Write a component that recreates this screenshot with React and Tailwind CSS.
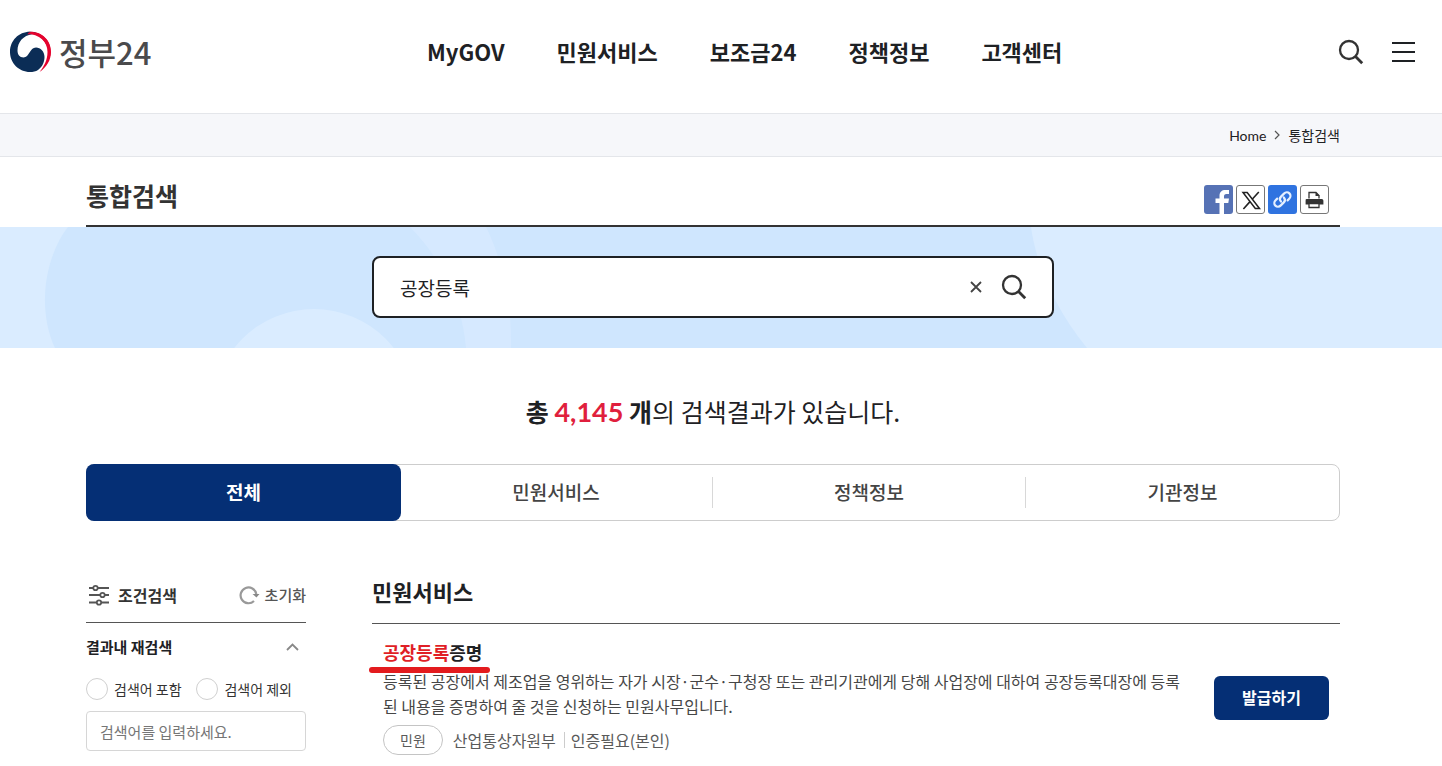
import { useState } from 'react';

const MENUS = ['MyGOV', '민원서비스', '보조금24', '정책정보', '고객센터'];
const TABS = ['전체', '민원서비스', '정책정보', '기관정보'];

function SearchIcon({ className }) {
  return (
    <svg viewBox="0 0 26 26" className={className} fill="none" stroke="currentColor" aria-hidden="true">
      <circle cx="11" cy="11" r="9" strokeWidth="2.3" />
      <path d="M17.5 17.5 L24.2 24.2" strokeWidth="2.8" />
    </svg>
  );
}

function Logo() {
  return (
    <a href="#" className="flex items-center gap-2 text-[#4a4a4c]">
      <svg viewBox="0 0 42 42" className="size-[42px]" aria-hidden="true">
        {/* red outer crescent */}
        <path d="M19 1 C32 -0.5 42 9 42 21 C42 29 37.5 36.5 30.5 41 C35 35.5 38.5 29 38.5 21 C38.5 11 31 3 19 1 Z" fill="#e4032e" />
        {/* navy lobe with the white swirl cut out */}
        <path d="M21 0.8 C9.5 0.8 1 9.8 1 21 C1 32 10 41 21 41 C24 41 26.8 40.4 29 39 C34 35.5 35.5 30 35.5 26 C35.5 20.5 31.5 16.5 27 16.5 C20.5 16.5 20.5 26.5 14.5 26.5 C10.5 26.5 8.5 23.5 8.5 19.5 C8.5 11 14.5 4.3 23 3.2 C26 2.9 28.5 3.2 30.5 4 C28 2 24.5 0.8 21 0.8 Z" fill="#0b2d56" />
        <path d="M22 1 C33 1 41.6 9.5 41.6 20.5 C41.6 23 41.2 25.5 40.4 28 C40.5 14 34 5.5 22 3.3 C20.5 3.1 19.5 3.3 18.5 3.6 C19 2.2 20 1 22 1 Z" fill="#e4032e" />
      </svg>
      <span className="text-[31px] leading-none font-medium">정부24</span>
    </a>
  );
}

function Header() {
  return (
    <header className="flex h-[114px] items-center justify-between border-b border-[#e4e6ea] pr-[26px] pb-[10px] pl-[9px]">
      <Logo />
      <nav className="flex gap-[52px] text-[22px] font-bold text-[#1e2124]">
        {MENUS.map((menu) => (
          <a key={menu} href="#">{menu}</a>
        ))}
      </nav>
      <div className="flex items-center gap-7 text-[#333]">
        <button aria-label="검색"><SearchIcon className="size-[26px]" /></button>
        <button aria-label="전체메뉴">
          <svg viewBox="0 0 24 20" className="h-5 w-6" stroke="#1e2124" strokeWidth="2" aria-hidden="true">
            <path d="M0 1 H23 M0 10 H23 M0 19 H23" />
          </svg>
        </button>
      </div>
    </header>
  );
}

function ShareButtons() {
  return (
    <div className="flex gap-[3px] pr-[11px]">
      <button aria-label="페이스북 공유" className="size-[29px] overflow-hidden rounded-[3px] bg-[#5672b5]">
        <svg viewBox="0 0 29 29" className="size-full" aria-hidden="true">
          <path d="M15.5 29 V18 H11.5 V13.5 H15.5 V11 C15.5 6.8 18 5 21.3 5 H25 V9 H22.5 C20.5 9 20 10 20 11.4 V13.5 H25 L24.3 18 H20 V29 Z" fill="#fff" />
        </svg>
      </button>
      <button aria-label="X 공유" className="size-[29px] rounded-[3px] border border-[#777] bg-white">
        <svg viewBox="0 0 27 27" className="size-full" fill="none" stroke="#222" aria-hidden="true">
          <path d="M6 6.5 H10.2 L22.5 22.5 H18.3 Z" strokeWidth="1.5" />
          <path d="M21.8 6 L15.2 13.2 M13 15.6 L6.4 23" strokeWidth="1.6" />
        </svg>
      </button>
      <button aria-label="주소 복사" className="size-[29px] rounded-[3px] bg-[#2f73e0]">
        <svg viewBox="0 0 29 29" className="size-full" fill="none" stroke="#e6f0ff" strokeWidth="2.2" strokeLinecap="round" aria-hidden="true">
          <path d="M13 16.6 C11.4 14.8 11.6 13 13 11.6 L16 8.6 C17.6 7 20 7 21.4 8.4 C22.9 9.9 22.8 12.2 21.2 13.8 L19.6 15.4" />
          <path d="M15.8 12.4 C17.4 14.2 17.2 16 15.8 17.4 L12.8 20.4 C11.2 22 8.8 22 7.4 20.6 C5.9 19.1 6 16.8 7.6 15.2 L9.2 13.6" />
        </svg>
      </button>
      <button aria-label="인쇄" className="size-[29px] rounded-[3px] border border-[#777] bg-white">
        <svg viewBox="0 0 27 27" className="size-full" aria-hidden="true">
          <path d="M8 12.5 V6.5 H15 L18 9.5 V12.5" fill="none" stroke="#333" strokeWidth="1.3" />
          <path d="M14.5 6 L18.7 10 H14.5 Z" fill="#333" />
          <path d="M5.5 13 H20.5 C21.8 13 22.4 13.8 22.4 15 V18.5 H4.6 V15 C4.6 13.8 4.6 13 5.5 13 Z" fill="#333" />
          <path d="M8 17.5 V21.5 H18 V17.5 Z" fill="#fff" stroke="#333" strokeWidth="1.3" />
        </svg>
      </button>
    </div>
  );
}

function SearchBand() {
  const [keyword, setKeyword] = useState('공장등록');

  return (
    <section className="relative h-[121px] overflow-hidden bg-[#cfe6fe] pt-[29px] pr-4">
      <svg width="1442" height="121" className="absolute top-0 left-0 h-full" aria-hidden="true">
        <path d="M0 0 H68 C46 28 36 80 55 121 H0 Z" fill="#daecff" />
        <path d="M410 0 H486 C502 32 512 75 511 121 H466 C462 75 442 32 410 0 Z" fill="#d6e9ff" />
        <circle cx="314" cy="183" r="101" fill="#daecff" />
      </svg>
      <svg viewBox="0 0 411 121" className="absolute top-0 right-0 h-full" aria-hidden="true">
        <path d="M0 0 H411 V121 H56 C26 84 6 42 0 0 Z" fill="#daecff" />
      </svg>
      <form className="relative mx-auto flex h-[62px] max-w-[682px] items-center rounded-lg border-2 border-[#1e2124] bg-white pr-[25px] pl-[26px]">
        <input
          type="text"
          aria-label="통합검색어"
          value={keyword}
          onChange={(e) => setKeyword(e.target.value)}
          className="min-w-0 flex-1 pt-[2px] text-[19px] text-[#1e2124] outline-none"
        />
        <button type="button" aria-label="검색어 삭제" onClick={() => setKeyword('')} className="mr-[15px] p-1">
          <svg viewBox="0 0 12 12" className="size-3" stroke="#444" strokeWidth="1.8" aria-hidden="true">
            <path d="M1 1 L11 11 M11 1 L1 11" />
          </svg>
        </button>
        <button type="button" aria-label="검색" className="text-[#333]"><SearchIcon className="size-[26px]" /></button>
      </form>
    </section>
  );
}

function ResultTabs() {
  const [active, setActive] = useState('전체');

  return (
    <div role="tablist" className="mt-[33px] grid h-[57px] grid-cols-4 rounded-lg border border-[#cdcdcd] text-[19px]">
      {TABS.map((tab, i) => (
        <button
          key={tab}
          role="tab"
          aria-selected={active === tab}
          onClick={() => setActive(tab)}
          className={active === tab
            ? '-m-px rounded-lg bg-[#052f75] font-bold text-white'
            : `my-3 font-medium text-[#444] ${i < TABS.length - 1 ? 'border-r border-[#d8d8d8]' : ''}`}
        >
          {tab}
        </button>
      ))}
    </div>
  );
}

function FilterPanel() {
  return (
    <aside className="w-[220px] shrink-0 text-[14px] text-[#1e2124]">
      <div className="flex h-[59px] items-center justify-between border-b border-[#555] pt-1">
        <h2 className="flex items-center gap-2 pl-[2px] text-[16px] font-bold text-[#333]">
          <svg viewBox="0 0 22 22" className="size-[22px]" fill="#fff" stroke="#555" strokeWidth="1.8" aria-hidden="true">
            <path d="M1 4 H21 M1 11 H21 M1 18.5 H21" />
            <circle cx="7.5" cy="4" r="2.2" />
            <circle cx="14.5" cy="11" r="2.2" />
            <circle cx="11" cy="18.5" r="2.2" />
          </svg>
          조건검색
        </h2>
        <button className="flex items-center gap-1 text-[15px] font-medium text-[#555]">
          <svg viewBox="0 0 22 20" className="h-5 w-[22px]" aria-hidden="true">
            <path d="M15 16 A7.9 7.9 0 1 1 17.3 9" fill="none" stroke="#999" strokeWidth="2.2" />
            <path d="M13.5 9 H20.5 L17.4 12.4 Z" fill="#888" />
          </svg>
          초기화
        </button>
      </div>
      <button className="flex h-12 w-full items-center justify-between pr-[7px] text-[15px] font-bold" aria-expanded="true">
        결과내 재검색
        <svg viewBox="0 0 13 8" className="h-2 w-[13px]" fill="none" stroke="#888" strokeWidth="1.8" aria-hidden="true">
          <path d="M1 7 L6.5 1.5 L12 7" />
        </svg>
      </button>
      <div className="mt-[2px] flex h-8 items-center justify-between pr-[14px] text-[#333]">
        <label className="flex items-center gap-[6px]">
          <input type="radio" name="scope" className="size-[22px] appearance-none rounded-full border border-[#d0d0d0] checked:border-[6px] checked:border-[#052f75]" />
          검색어 포함
        </label>
        <label className="flex items-center gap-[6px]">
          <input type="radio" name="scope" className="size-[22px] appearance-none rounded-full border border-[#d0d0d0] checked:border-[6px] checked:border-[#052f75]" />
          검색어 제외
        </label>
      </div>
      <input
        type="text"
        aria-label="결과내 검색어"
        placeholder="검색어를 입력하세요."
        className="mt-[6px] h-10 w-full rounded-[4px] border border-[#d6d6d6] px-[13px] text-[15px] placeholder:text-[#767676]"
      />
    </aside>
  );
}

function ServiceResults() {
  return (
    <section className="min-w-0 flex-1">
      <h2 className="flex h-[60px] items-center border-b border-[#555] pb-[5px] text-[22px] font-bold text-[#1e2124]">민원서비스</h2>
      <article className="flex items-center justify-between pt-[15px] pr-[11px] pl-[11px]">
        <div className="max-w-[800px]">
          <h3 className="relative w-fit text-[18px] leading-[27px] font-bold text-[#1e2124]">
            <a href="#"><mark className="bg-transparent text-[#e01f26]">공장등록</mark>증명</a>
            <span className="absolute top-7 -right-2 -left-[14px] h-[6px] rounded-full bg-[#e31b1e]" />
          </h3>
          <p className="mt-[3px] text-[16px] leading-[25px] text-[#464646]">
            등록된 공장에서 제조업을 영위하는 자가 시장·군수·구청장 또는 관리기관에게 당해 사업장에 대하여 공장등록대장에 등록된 내용을 증명하여 줄 것을 신청하는 민원사무입니다.
          </p>
          <div className="mt-[6px] flex items-center text-[16px] leading-[28px] text-[#5a5a5a]">
            <span className="mr-[10px] rounded-full border border-[#c4c4c4] px-4 text-[14px]">민원</span>
            <span className="mr-2">산업통상자원부</span>
            <span className="h-4 border-l border-[#ccc] pl-[6px] leading-4">인증필요(본인)</span>
          </div>
        </div>
        <button className="mt-[2px] h-11 w-[115px] shrink-0 rounded-md bg-[#052f75] pb-[2px] text-[16px] font-bold text-white">발급하기</button>
      </article>
    </section>
  );
}

export default function App() {
  return (
    <div className="bg-white font-['Noto_Sans_CJK_KR',sans-serif] text-[#1e2124]">
      <Header />
      <div className="border-b border-[#e4e6ea] bg-[#f6f7fa] pr-4">
        <nav aria-label="현재 위치" className="mx-auto flex h-[42px] max-w-[1254px] items-center justify-end gap-2 text-[14px]">
          <a href="#" className="font-['Lato','Noto_Sans_CJK_KR',sans-serif]">Home</a>
          <svg viewBox="0 0 6 10" className="h-[10px] w-[6px]" fill="none" stroke="#555" strokeWidth="1.2" aria-hidden="true">
            <path d="M1 1 L5 5 L1 9" />
          </svg>
          <span>통합검색</span>
        </nav>
      </div>
      <div className="pr-4">
        <div className="mx-auto flex h-[70px] max-w-[1254px] items-center justify-between border-b-2 border-[#333]">
          <h1 className="pt-2 text-[25px] leading-9 font-bold text-[#333]">통합검색</h1>
          <div className="pt-4"><ShareButtons /></div>
        </div>
      </div>
      <SearchBand />
      <main className="pr-4">
        <div className="mx-auto max-w-[1254px] pt-[43px]">
          <p className="text-center text-[25px] leading-10">
            <strong>총 <span className="font-['Lato','Noto_Sans_CJK_KR',sans-serif] text-[27px] leading-none text-[#e01f3d]">4,145</span> 개</strong>의 검색결과가 있습니다.
          </p>
          <ResultTabs />
          <div className="flex gap-[66px] pt-[43px]">
            <FilterPanel />
            <ServiceResults />
          </div>
        </div>
      </main>
    </div>
  );
}
